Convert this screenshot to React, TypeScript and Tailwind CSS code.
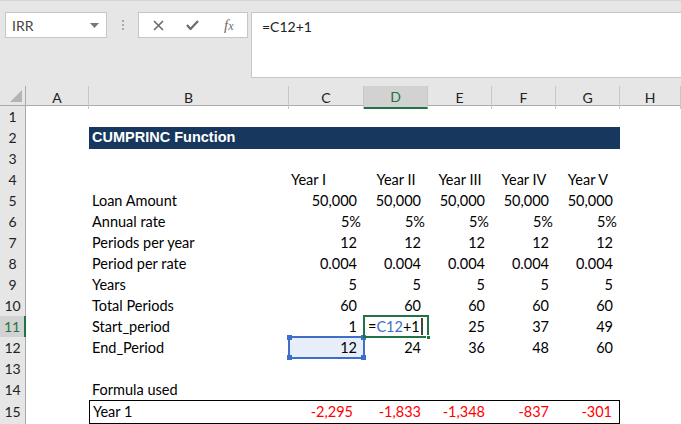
import React from 'react';

const FONT = { fontFamily: 'Lato, "Open Sans", sans-serif' };

type Row = {
  n: number;
  b?: string;
  vals?: string[];
  kind?: 'years' | 'pct' | 'red' | 'title' | 'edit';
};

const rows: Row[] = [
  { n: 1 },
  { n: 2, kind: 'title' },
  { n: 3 },
  { n: 4, kind: 'years', vals: ['Year I', 'Year II', 'Year III', 'Year IV', 'Year V'] },
  { n: 5, b: 'Loan Amount', vals: ['50,000', '50,000', '50,000', '50,000', '50,000'] },
  { n: 6, b: 'Annual rate', kind: 'pct', vals: ['5%', '5%', '5%', '5%', '5%'] },
  { n: 7, b: 'Periods per year', vals: ['12', '12', '12', '12', '12'] },
  { n: 8, b: 'Period per rate', vals: ['0.004', '0.004', '0.004', '0.004', '0.004'] },
  { n: 9, b: 'Years', vals: ['5', '5', '5', '5', '5'] },
  { n: 10, b: 'Total Periods', vals: ['60', '60', '60', '60', '60'] },
  { n: 11, b: 'Start_period', kind: 'edit', vals: ['1', '', '25', '37', '49'] },
  { n: 12, b: 'End_Period', vals: ['12', '24', '36', '48', '60'] },
  { n: 13 },
  { n: 14, b: 'Formula used' },
  { n: 15, b: 'Year 1', kind: 'red', vals: ['-2,295', '-1,833', '-1,348', '-837', '-301'] },
];

const letters = ['A', 'B', 'C', 'D', 'E', 'F', 'G', 'H'];
const gridCols = 'grid grid-cols-[26px_63px_200px_75px_64px_64px_64px_64px_61px]';

const Handle: React.FC<{ className: string; color: string }> = ({ className, color }) => (
  <div className={`absolute w-[5px] h-[5px] ${color} ${className}`} />
);

const ValueCell: React.FC<{ row: Row; i: number; v: string }> = ({ row, i, v }) => {
  const last = i === 4;
  if (row.kind === 'years') {
    return (
      <div className={`flex items-center h-full ${i === 0 ? 'justify-start pl-[2px]' : 'justify-center'}`}>
        {v}
      </div>
    );
  }
  if (row.kind === 'edit' && i === 1) {
    return (
      <div className="relative h-full">
        <div className="absolute -left-[1px] -top-[1px] w-[66px] h-[23px] border-2 border-[#217346] flex items-center pl-[3px] z-10">
          <span>=</span>
          <span className="text-[#3c6fc9]">C12</span>
          <span>+1</span>
          <span className="ml-[1px] w-[2px] h-[17px] bg-[#444]" />
          <Handle className="-right-[4px] -bottom-[4px] border border-white" color="bg-[#217346]" />
        </div>
      </div>
    );
  }
  if (row.n === 12 && i === 0) {
    return (
      <div className="relative h-full bg-[#e8eef9] flex items-center justify-end pr-[7px]">
        {v}
        <div className="absolute -left-[1px] -top-[1px] w-[77px] h-[23px] border-2 border-[#3c6fc9]">
          <Handle className="-left-[3px] -top-[3px]" color="bg-[#3c6fc9]" />
          <Handle className="-right-[3px] -top-[3px]" color="bg-[#3c6fc9]" />
          <Handle className="-left-[3px] -bottom-[3px]" color="bg-[#3c6fc9]" />
          <Handle className="-right-[3px] -bottom-[3px]" color="bg-[#3c6fc9]" />
        </div>
      </div>
    );
  }
  const pad = row.kind === 'pct' ? 'pr-[3px]' : row.kind === 'red' && i === 0 ? 'pr-[11px]' : 'pr-[7px]';
  const red = row.kind === 'red' ? 'text-[#ff0000] border-y border-black' : '';
  return (
    <div className={`flex items-center justify-end h-full ${pad} ${red} ${row.kind === 'red' && last ? 'border-r' : ''}`}>
      {v}
    </div>
  );
};

export default function App() {
  return (
    <div className="w-[681px] h-[424px] overflow-hidden bg-white text-[14.5px] text-black" style={FONT}>
      {/* formula bar */}
      <div className="h-[86px] bg-[#e6e6e6] flex items-start pt-[11px] pl-[5px] border-t border-[#d4d4d4]">
        <div className="w-[102px] h-[26px] bg-white border border-[#c6c6c6] flex items-center justify-between pl-[6px] pr-[7px] text-[14px] text-[#444]">
          <span>IRR</span>
          <svg width="9" height="5" viewBox="0 0 9 5">
            <polygon points="0,0 9,0 4.5,5" fill="#777" />
          </svg>
        </div>
        <div className="w-[31px] h-[26px] flex flex-col items-center justify-center gap-[2px]">
          <span className="w-[2px] h-[2px] bg-[#aaa]" />
          <span className="w-[2px] h-[2px] bg-[#aaa]" />
          <span className="w-[2px] h-[2px] bg-[#aaa]" />
        </div>
        <div className="w-[110px] h-[26px] bg-white border border-[#c6c6c6] flex items-center">
          <svg className="ml-[14px]" width="11" height="11" viewBox="0 0 11 11">
            <path d="M1 1 L10 10 M10 1 L1 10" stroke="#6b6b6b" strokeWidth="1.6" />
          </svg>
          <svg className="ml-[22px]" width="13" height="10" viewBox="0 0 13 10">
            <path d="M1 5 L4.5 9 L12 1" stroke="#6b6b6b" strokeWidth="2.2" fill="none" />
          </svg>
          <span className="ml-[25px] italic text-[15px] text-[#6b6b6b]" style={{ fontFamily: '"Liberation Serif", serif' }}>
            f<span className="text-[12px]">x</span>
          </span>
        </div>
        <div className="ml-[3px] flex-1 h-[66px] bg-white border border-r-0 border-[#c6c6c6] pl-[10px] pt-[3px] text-[14px] text-[#222]">
          =C12+1
        </div>
      </div>

      {/* column headers */}
      <div className={`${gridCols} h-[20px] bg-[#e6e6e6] border-b border-[#ababab]`}>
        <div className="relative border-r border-[#ababab]">
          <svg className="absolute left-[10px] top-[4px]" width="12" height="12" viewBox="0 0 12 12">
            <polygon points="12,0 12,12 0,12" fill="#b4b4b4" />
          </svg>
        </div>
        {letters.map((l) => (
          <div
            key={l}
            className={`flex items-center justify-center text-[14px] border-r border-[#c6c6c6] ${
              l === 'D' ? 'bg-[#d2d2d2] text-[#217346] border-b-2 border-b-[#217346]' : 'text-[#222]'
            }`}
          >
            {l}
          </div>
        ))}
      </div>

      {/* rows */}
      {rows.map((row) => (
        <div key={row.n} className={`${gridCols} h-[21px]`}>
          <div
            className={`flex items-center justify-center text-[14px] border-b border-[#d4d4d4] ${
              row.n === 11
                ? 'bg-[#d2d2d2] text-[#217346] border-r-2 border-r-[#217346]'
                : 'bg-[#e6e6e6] text-[#222] border-r border-r-[#ababab]'
            }`}
          >
            {row.n}
          </div>
          <div />
          {row.kind === 'title' ? (
            <div className="col-span-6 bg-[#17375e] text-white font-bold text-[14.5px] flex items-center pl-[3px]" style={{ fontFamily: '"Liberation Sans", Arial, sans-serif' }}>
              CUMPRINC Function
            </div>
          ) : (
            <>
              <div className={`flex items-center pl-[3px] ${row.kind === 'red' ? 'border border-r-0 border-black' : ''}`}>
                {row.b}
              </div>
              {[0, 1, 2, 3, 4].map((i) =>
                row.vals ? <ValueCell key={i} row={row} i={i} v={row.vals[i]} /> : <div key={i} />
              )}
            </>
          )}
          <div />
        </div>
      ))}
      {/* partial row 16 */}
      <div className={`${gridCols} h-[21px]`}>
        <div className="bg-[#e6e6e6] border-r border-[#ababab]" />
      </div>
    </div>
  );
}
